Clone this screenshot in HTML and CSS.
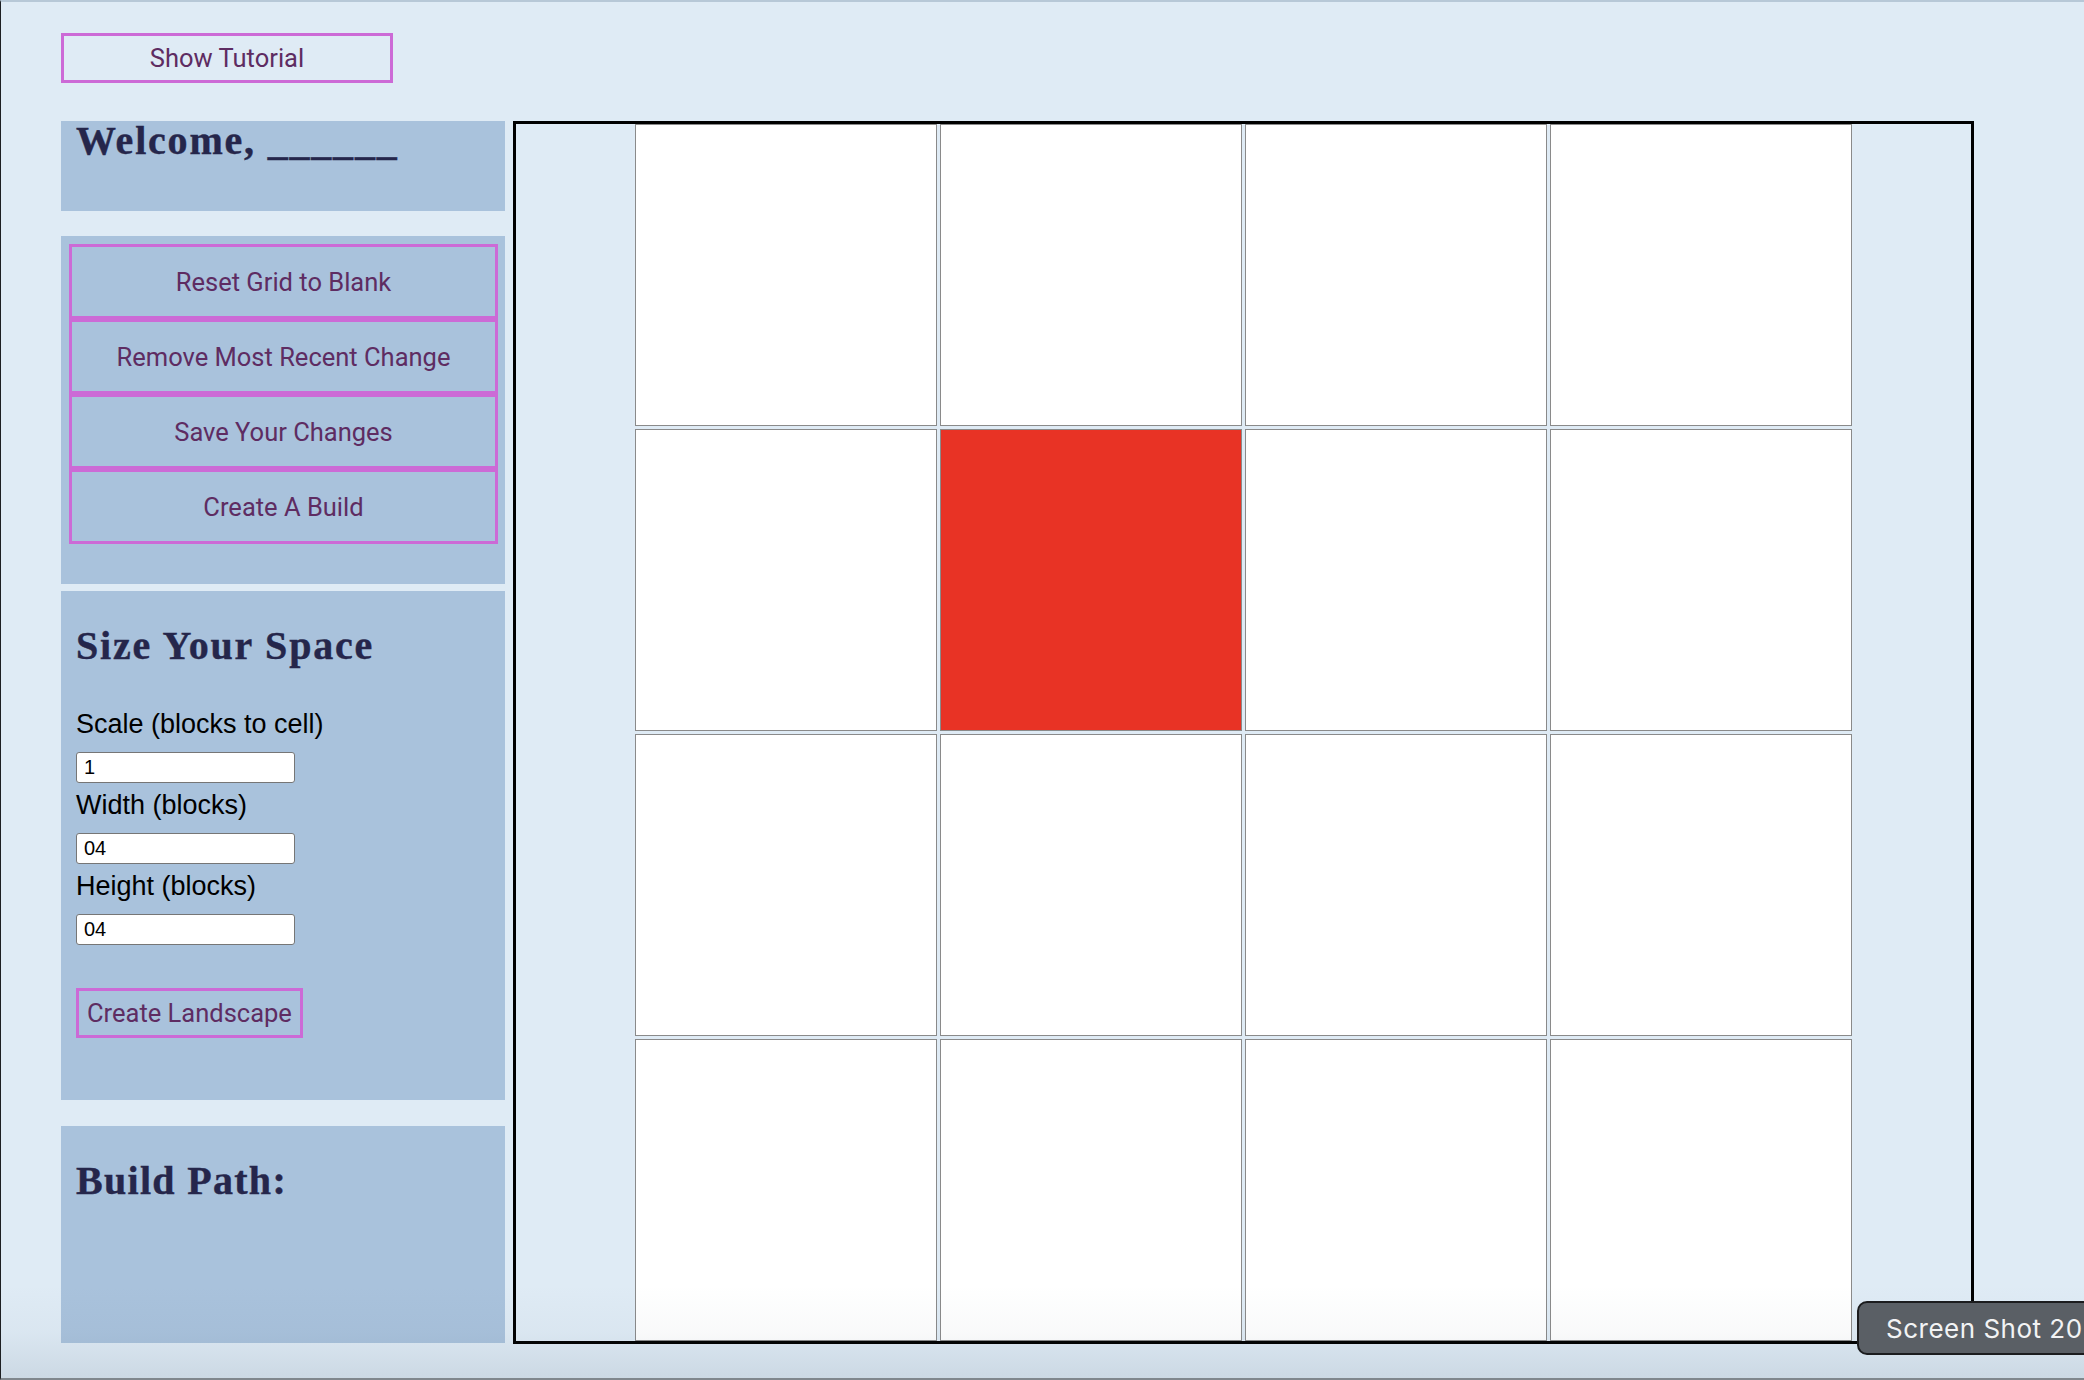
FILE: index.html
```html
<!DOCTYPE html>
<html lang="en">
<head>
<meta charset="utf-8">
<title>Landscape Builder</title>
<link rel="stylesheet" href="styles.css">
</head>
<body>
<div class="page">
  <div class="topbar">
    <button class="btn tutorial">Show Tutorial</button>
  </div>
  <div class="main">
    <aside class="sidebar">
      <section class="panel welcome">
        <h1 class="heading">Welcome, ______</h1>
      </section>
      <section class="panel actions">
        <button class="btn action">Reset Grid to Blank</button>
        <button class="btn action">Remove Most Recent Change</button>
        <button class="btn action">Save Your Changes</button>
        <button class="btn action">Create A Build</button>
      </section>
      <section class="panel size">
        <h2 class="heading">Size Your Space</h2>
        <label class="field-label first" for="scale">Scale (blocks to cell)</label>
        <input class="field" id="scale" type="text" value="1">
        <label class="field-label" for="width">Width (blocks)</label>
        <input class="field" id="width" type="text" value="04">
        <label class="field-label" for="height">Height (blocks)</label>
        <input class="field" id="height" type="text" value="04">
        <button class="btn landscape">Create Landscape</button>
      </section>
      <section class="panel build">
        <h2 class="heading build-title">Build Path:</h2>
      </section>
    </aside>
    <div class="canvas">
      <div class="grid">
        <div class="cell"></div><div class="cell"></div><div class="cell"></div><div class="cell"></div>
        <div class="cell"></div><div class="cell red"></div><div class="cell"></div><div class="cell"></div>
        <div class="cell"></div><div class="cell"></div><div class="cell"></div><div class="cell"></div>
        <div class="cell"></div><div class="cell"></div><div class="cell"></div><div class="cell"></div>
      </div>
    </div>
  </div>
</div>
<div class="shade"></div>
<div class="badge">Screen Shot 20</div>
</body>
</html>
```
FILE: styles.css
```css
html, body {
  margin: 0;
  height: 100%;
  overflow: hidden;
}

body {
  background: #dfebf5;
  position: relative;
}

body::after {
  content: "";
  position: absolute;
  inset: 0;
  border-left: 1px solid #1d1f22;
  border-top: 2px solid #b7c8d7;
  border-bottom: 2px solid #80878d;
  pointer-events: none;
}

.page {
  padding: 33px 0 0 61px;
}

.btn {
  font-family: Roboto, "Liberation Sans", sans-serif;
  font-size: 25.5px;
  color: #5e2c62;
  background: transparent;
  border: 3px solid #cc6ad6;
  box-sizing: border-box;
  padding: 0;
  margin: 0;
  cursor: pointer;
}

.tutorial {
  display: block;
  width: 332px;
  height: 50px;
}

.main {
  display: flex;
  align-items: flex-start;
  gap: 8px;
  margin-top: 38px;
}

.sidebar {
  width: 444px;
  display: flex;
  flex-direction: column;
}

.panel {
  background: #a9c2dc;
  box-sizing: border-box;
}

.heading {
  margin: 0;
  font-family: "Liberation Serif", serif;
  font-weight: bold;
  font-size: 40px;
  line-height: 40px;
  letter-spacing: 1.8px;
  color: #25264b;
  -webkit-text-stroke: 0.4px #25264b;
}

.build-title {
  letter-spacing: 1.3px;
}

.welcome {
  height: 90px;
  padding-left: 15px;
}

.actions {
  margin-top: 25px;
  padding: 8px 7px 40px 8px;
  display: flex;
  flex-direction: column;
}

.action {
  width: 100%;
  height: 75px;
}

.size {
  margin-top: 7px;
  height: 509px;
  padding: 35px 15px 0;
  display: flex;
  flex-direction: column;
  align-items: flex-start;
}

.field-label {
  font-family: "Liberation Sans", Arial, sans-serif;
  font-size: 27px;
  line-height: 30px;
  color: #000;
  margin-top: 7px;
}

.field-label.first {
  margin-top: 43px;
}

.field {
  width: 219px;
  height: 31px;
  box-sizing: border-box;
  margin: 13px 0 0;
  border: 1px solid #767676;
  border-radius: 3px;
  background: #fff;
  color: #000;
  font-family: "Liberation Sans", Arial, sans-serif;
  font-size: 20px;
  padding: 0 7px;
}

.landscape {
  height: 50px;
  padding: 0 8px;
  margin-top: 43px;
}

.build {
  margin-top: 26px;
  height: 217px;
  padding: 35px 15px 0;
}

.canvas {
  width: 1461px;
  height: 1223px;
  box-sizing: border-box;
  border: 3px solid #000;
}

.grid {
  width: 1217px;
  height: 1217px;
  margin: 0 auto;
  display: grid;
  grid-template-columns: repeat(4, 1fr);
  grid-template-rows: repeat(4, 1fr);
  gap: 3px;
}

.cell {
  background: #fff;
  border: 1px solid #8a8a8a;
}

.cell.red {
  background: #e83325;
}

.shade {
  position: absolute;
  left: 0;
  right: 0;
  bottom: 0;
  height: 95px;
  background: linear-gradient(to bottom, rgba(60, 80, 100, 0) 0%, rgba(60, 80, 100, 0.03) 50%, rgba(60, 80, 100, 0.12) 100%);
  pointer-events: none;
}

.badge {
  position: absolute;
  left: 1857px;
  top: 1301px;
  width: 260px;
  height: 54px;
  box-sizing: border-box;
  display: flex;
  align-items: center;
  padding-left: 27px;
  background: #5a5f65;
  border: 2px solid #1b1c1e;
  border-radius: 10px;
  color: #f2f3f4;
  font-family: Inter, "Noto Sans", sans-serif;
  font-size: 26px;
  letter-spacing: 0.5px;
  white-space: nowrap;
}
```
